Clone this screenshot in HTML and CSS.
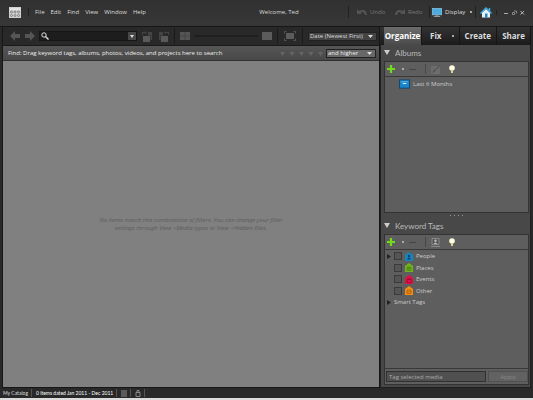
FILE: index.html
```html
<!DOCTYPE html>
<html lang="en">

<head>
    <meta charset="UTF-8">
    <meta name="viewport" content="width=device-width, initial-scale=1.0">
    <title>Organizer</title>
    <link rel="stylesheet" href="styles.css">
</head>

<body>
    <header class="titlebar">
        <svg class="logo" width="12" height="11" viewBox="0 0 12 11">
            <rect width="12" height="11" fill="#d2d2d2" />
            <path d="M1 2h10" stroke="#f4f4f4" />
            <g fill="none" stroke="#666" stroke-width=".7">
                <circle cx="2.5" cy="5" r="1" /><circle cx="6" cy="5" r="1" /><circle cx="9.5" cy="5" r="1" />
                <circle cx="2.5" cy="8.5" r="1" /><circle cx="6" cy="8.5" r="1" /><circle cx="9.5" cy="8.5" r="1" />
            </g>
        </svg>
        <nav class="menu">
            <button>File</button>
            <button>Edit</button>
            <button>Find</button>
            <button>View</button>
            <button>Window</button>
            <button>Help</button>
        </nav>
        <span class="welcome">Welcome, Ted</span>
        <div class="actions">
            <button class="history" disabled>
                <svg width="10" height="7" viewBox="0 0 10 7"><path d="M0 0v5h5L3.500 3.500Q7 1.500 8 6h2Q9-1 2 2z" fill="#555" /></svg>
                Undo
            </button>
            <button class="history" disabled>
                <svg width="10" height="7" viewBox="0 0 10 7"><path d="M10 0v5H5L6.500 3.500Q3 1.500 2 6H0Q1-1 8 2z" fill="#555" /></svg>
                Redo
            </button>
            <button class="display">
                <svg width="10" height="9" viewBox="0 0 11 10">
                    <rect x=".5" y=".5" width="10" height="7" fill="#4dabdf" stroke="#79b9da" />
                    <path d="M4 8h3v1h2v1H2V9h2z" fill="#8b9aa2" />
                </svg>
                Display
                <span class="dot"></span>
            </button>
            <button class="home" aria-label="Home">
                <svg width="12" height="11" viewBox="0 0 12 11">
                    <path d="M2 5.500v5h8v-5L6 2z" fill="#e6f3fa" />
                    <path d="M.5 6.500L6 1l5.500 5.500M9.500 1v3" fill="none" stroke="#43a9df" stroke-width="1.500" />
                    <rect x="5" y="6.500" width="2.500" height="4" fill="#2585bb" />
                </svg>
            </button>
            <div class="window-buttons">
                <button aria-label="Minimize"><svg width="5" height="5"><path d="M0 3.500h4" stroke="#aaa" /></svg></button>
                <button aria-label="Restore"><svg width="5" height="5"><path d="M.5 2.500h2v2h-2zM2 1h2.500v2.500" fill="none" stroke="#888" /></svg></button>
                <button aria-label="Close"><svg width="5" height="5"><path d="M.5 1l3.500 3.500M4 1L.5 4.500" stroke="#bbb" /></svg></button>
            </div>
        </div>
    </header>

    <div class="workspace">
        <main class="browser">
            <div class="toolbar">
                <button aria-label="Back"><svg width="10" height="10" viewBox="0 0 10 10"><path d="M0 5l5-5v3h5v4H5v3z" fill="#555" /></svg></button>
                <button class="forward" aria-label="Forward"><svg width="10" height="10" viewBox="0 0 10 10"><path d="M10 5L5 0v3H0v4h5v3z" fill="#555" /></svg></button>
                <div class="search">
                    <svg width="8" height="8" viewBox="0 0 8 8"><circle cx="3" cy="3" r="2.200" fill="none" stroke="#ddd" /><path d="M4.500 4.500L7.500 7.500" stroke="#ddd" stroke-width="1.400" /></svg>
                    <input type="text" aria-label="Search">
                    <button aria-label="Search options"><svg width="4" height="3"><path d="M0 0h4L2 3z" fill="#ddd" /></svg></button>
                </div>
                <div class="rotate">
                    <button aria-label="Rotate left"><svg width="11" height="11" viewBox="0 0 11 11"><path d="M1 5h7v6H1z" fill="#5a5a5a" /><path d="M6 1h4v8H8.500V4.500H6zM0 4V1h3V0l2 1.500L3 3V2H1v2z" fill="#444" /></svg></button>
                    <button aria-label="Rotate right"><svg width="11" height="11" viewBox="0 0 11 11"><path d="M3 5h7v6H3z" fill="#5a5a5a" /><path d="M5 1H1v8h1.500V4.500H5zM11 4V1H8V0L6 1.500 8 3V2h2v2z" fill="#444" /></svg></button>
                </div>
                <div class="zoom">
                    <svg width="10" height="8" viewBox="0 0 10 8"><path d="M0 0h10v8H0z" fill="#555" /><path d="M5 0v8M0 4h10" stroke="#464646" /></svg>
                    <input type="range" aria-label="Thumbnail size" disabled>
                    <svg width="10" height="8"><rect width="10" height="8" fill="#5c5c5c" /></svg>
                </div>
                <button class="fullscreen" aria-label="Full screen"><svg width="12" height="10" viewBox="0 0 12 10"><rect x="2" y="2" width="8" height="6" fill="#5c5c5c" /><path d="M.5 2.500v-2h2M9.500 .5h2v2M11.500 7.500v2h-2M2.500 9.500h-2v-2" fill="none" stroke="#555" /></svg></button>
                <select class="sort" aria-label="Sort order">
                    <option>Date (Newest First)</option>
                </select>
            </div>
            <div class="findbar">
                <span>Find: Drag keyword tags, albums, photos, videos, and projects here to search</span>
                <svg class="stars" width="44" height="5" viewBox="0 0 44 5">
                    <path d="M0 1h5L2.500 5zM9.500 1h5L12 5zM19 1h5l-2.500 4zM28.500 1h5L31 5zM38 1h5l-2.500 4z" fill="#656565" />
                </svg>
                <select class="rating" aria-label="Rating filter">
                    <option>and higher</option>
                </select>
            </div>
            <div class="photos">
                <p>No items match this combination of filters. You can change your filter<br>settings through View &gt;Media types or View &gt;Hidden Files.</p>
            </div>
        </main>

        <aside class="sidebar">
            <nav class="tabs">
                <button class="active">Organize</button>
                <button class="fix">Fix <span class="dot"></span></button>
                <button>Create</button>
                <button>Share</button>
            </nav>
            <div class="panels">
                <section class="panel albums">
                    <h2><svg width="6" height="5"><path d="M0 0h6L3 5z" fill="#ccc" /></svg>Albums</h2>
                    <div class="box">
                        <div class="tools">
                            <button aria-label="New album"><svg width="8" height="8"><path d="M4 0v8M0 4h8" stroke="#72dc1b" stroke-width="2.200" /></svg></button>
                            <span class="dot"></span>
                            <button class="remove" aria-label="Delete album"><svg width="7" height="8"><path d="M0 4.500h7" stroke="#444" /></svg></button>
                            <button class="edit" aria-label="Edit album"><svg width="9" height="9" viewBox="0 0 9 9"><rect y="1" width="9" height="8" fill="#6c6c6c" /><path d="M1.500 8l1-3 5.500-5 1 1-5 5z" fill="#474747" /><path d="M3 5.500l5-5" stroke="#909090" stroke-width=".7" /></svg></button>
                            <button aria-label="Tip"><svg width="6" height="9" viewBox="0 0 6 9"><circle cx="3" cy="3" r="2.800" fill="#fffde0" /><path d="M2 5h2v3H2z" fill="#d8d19a" /></svg></button>
                        </div>
                        <div class="album">
                            <svg width="11" height="10" viewBox="0 0 12 10"><rect x=".5" y=".5" width="11" height="9" fill="#1686cc" stroke="#16436b" /><path d="M2 2.500h8" stroke="#65b8e7" /><path d="M4 4.500h4" stroke="#fff" /></svg>
                            Last 6 Months
                        </div>
                    </div>
                </section>
                <div class="splitter"><i></i><i></i><i></i><i></i></div>
                <section class="panel keywords">
                    <h2><svg width="6" height="5"><path d="M0 0h6L3 5z" fill="#ccc" /></svg>Keyword Tags</h2>
                    <div class="box">
                        <div class="tools">
                            <button aria-label="New keyword tag"><svg width="8" height="8"><path d="M4 0v8M0 4h8" stroke="#72dc1b" stroke-width="2.200" /></svg></button>
                            <span class="dot"></span>
                            <button class="remove" aria-label="Delete keyword tag"><svg width="7" height="8"><path d="M0 4.500h7" stroke="#444" /></svg></button>
                            <button class="edit" aria-label="Find people"><svg width="9" height="9" viewBox="0 0 9 9"><path d="M1 .5h7v6H1zM0 8.500h9" fill="#555" stroke="#888" /><circle cx="4.500" cy="2.800" r="1.200" fill="#bbb" /><path d="M2.500 6q2-3 4 0z" fill="#bbb" /></svg></button>
                            <button aria-label="Tip"><svg width="6" height="9" viewBox="0 0 6 9"><circle cx="3" cy="3" r="2.800" fill="#fffde0" /><path d="M2 5h2v3H2z" fill="#d8d19a" /></svg></button>
                        </div>
                        <ul class="tags">
                            <li>
                                <svg class="arrow" width="4" height="5"><path d="M0 0l4 2.500L0 5z" fill="#222" /></svg>
                                <label><input type="checkbox">
                                    <svg width="8" height="9" viewBox="0 0 8 9"><path d="M0 9V3l4-3 4 3v6z" fill="#1684bf" /><circle cx="4" cy="4" r="1.200" fill="#0b4266" /><path d="M2 7.500q2-4 4 0z" fill="#0b4266" /></svg>
                                    People</label>
                            </li>
                            <li>
                                <span class="arrow"></span>
                                <label><input type="checkbox">
                                    <svg width="8" height="9" viewBox="0 0 8 9"><path d="M0 9V3l4-3 4 3v6z" fill="#72b51b" /><path d="M2 4h4v3.500H2zM4 4v3M2 5.500h4" fill="none" stroke="#4d801a" stroke-width=".8" /></svg>
                                    Places</label>
                            </li>
                            <li>
                                <span class="arrow"></span>
                                <label><input type="checkbox">
                                    <svg width="8" height="9" viewBox="0 0 8 9"><path d="M0 9V3l4-3 4 3v6z" fill="#df1046" /><path d="M2 4.500h4v3H2zM3 3v2M5 3v2" fill="none" stroke="#980c35" stroke-width=".8" /></svg>
                                    Events</label>
                            </li>
                            <li>
                                <span class="arrow"></span>
                                <label><input type="checkbox">
                                    <svg width="8" height="9" viewBox="0 0 8 9"><path d="M0 9V3l4-3 4 3v6z" fill="#f58d12" /><path d="M2 4h4v3.500H2zM2 5.700h4" fill="none" stroke="#b0600c" stroke-width=".8" /></svg>
                                    Other</label>
                            </li>
                            <li>
                                <svg class="arrow" width="4" height="5"><path d="M0 0l4 2.500L0 5z" fill="#222" /></svg>
                                Smart Tags
                            </li>
                        </ul>
                        <form class="tag-form">
                            <input type="text" placeholder="Tag selected media" aria-label="Tag selected media">
                            <button type="button" disabled>Apply</button>
                        </form>
                    </div>
                </section>
            </div>
        </aside>
    </div>

    <footer class="statusbar">
        <span>My Catalog</span>
        <span class="count">0 items dated Jan 2011 - Dec 2011</span>
        <span><svg width="6" height="7"><rect width="6" height="7" fill="#5a5a5a" /></svg></span>
        <span><svg width="6" height="7" viewBox="0 0 6 7"><path d="M1 2.500h4v4H1zM2 2V.5h2V2" fill="none" stroke="#888" /></svg></span>
    </footer>
</body>

</html>
```

FILE: styles.css
```css
* {
    box-sizing: border-box;
}

body {
    display: flex;
    flex-direction: column;
    height: 100vh;
    margin: 0;
    font-family: "Open Sans", "Noto Sans", sans-serif;
    font-size: 6px;
    line-height: 8px;
    color: #ddd;
    background-color: #292929;
    border-bottom: 2px solid #ddd;
}

button,
input,
select {
    font: inherit;
    color: inherit;
    margin: 0;
    padding: 0;
    border: none;
    background: none;
}

svg {
    display: block;
    flex: none;
}

button {
    display: flex;
    align-items: center;
    flex: none;
}

.dot {
    width: 2px;
    height: 2px;
    background-color: #aaa;
}

/* title bar */
.titlebar {
    display: flex;
    align-items: center;
    flex: none;
    height: 27px;
    padding: 0 8px 2px 9px;
    background: linear-gradient(#313131, #373737);
    border-bottom: 1px solid #161616;
}

.menu {
    display: flex;
    gap: 6px;
    margin-left: 7px;
    padding-left: 6px;
    border-left: 1px solid #202020;
}

.welcome {
    flex: 1;
    text-align: center;
    padding-left: 64px;
}

.actions {
    display: flex;
    align-items: center;
    height: 12px;
    border-left: 1px solid #202020;
}

.actions > button {
    gap: 3px;
    height: 12px;
}

.actions .history {
    width: 38px;
    padding-left: 8px;
    color: #777;
}

.actions .display {
    width: 46px;
    margin-left: 4px;
    padding-left: 2px;
    border-left: 1px solid #202020;
}

.display .dot {
    margin-left: 2px;
}

.actions .home {
    padding: 0 4px;
    border-left: 1px solid #202020;
}

.window-buttons {
    display: flex;
    gap: 3px;
    padding-left: 7px;
    border-left: 1px solid #202020;
}

/* workspace */
.workspace {
    display: flex;
    flex: 1;
    min-height: 0;
    padding: 0 2px;
}

.browser {
    display: flex;
    flex-direction: column;
    flex: 1;
    min-width: 0;
    border: 1px solid #171717;
    border-top: none;
}

.toolbar {
    display: flex;
    align-items: center;
    flex: none;
    height: 18px;
    padding: 0 2px 0 7px;
    background-color: #292929;
}

.toolbar .forward {
    margin: 0 4px 0 5px;
}

.search {
    display: flex;
    align-items: center;
    flex: 1;
    min-width: 0;
    height: 10px;
    padding-left: 1px;
    background-color: #1d1d1d;
    border: 1px solid #151515;
}

.search input {
    flex: 1;
    min-width: 0;
}

.search button {
    justify-content: center;
    width: 8px;
    height: 8px;
    background-color: #484848;
}

.rotate {
    display: flex;
    gap: 5px;
    padding: 0 5px;
}

.zoom {
    display: flex;
    align-items: center;
    gap: 4px;
    height: 16px;
    padding: 0 5px;
    border: 1px solid #1a1a1a;
    border-width: 0 1px;
}

.zoom input {
    appearance: none;
    width: 64px;
    height: 2px;
    background-color: #1f1f1f;
}

.zoom input::-webkit-slider-thumb {
    appearance: none;
    width: 0;
}

.fullscreen {
    height: 16px;
    padding: 0 6px;
    border-right: 1px solid #1a1a1a;
}

select {
    appearance: none;
    height: 9px;
    line-height: 7px;
    padding: 0 10px 0 1px;
    border: 1px solid #222;
    background: url("data:image/svg+xml,%3Csvg xmlns='http://www.w3.org/2000/svg' width='5' height='3'%3E%3Cpath d='M0 0h5L2.500 3z' fill='%23ddd'/%3E%3C/svg%3E") no-repeat right 3px center #444;
}

.sort {
    width: 69px;
    margin-left: 5px;
}

.findbar {
    display: flex;
    align-items: center;
    flex: none;
    height: 16px;
    padding: 0 3px 0 5px;
    color: #eee;
    background: linear-gradient(#565656, #484848);
    border-top: 1px solid #191919;
    border-bottom: 1px solid #303030;
}

.stars {
    margin-left: auto;
}

.rating {
    width: 50px;
    margin-left: 2px;
    background-color: #686868;
}

.photos {
    display: flex;
    align-items: center;
    justify-content: center;
    flex: 1;
    color: #5c5c5c;
    background-color: #808080;
}

.photos p {
    margin: 0;
    text-align: center;
    font-style: italic;
}

/* sidebar */
.sidebar {
    display: flex;
    flex-direction: column;
    flex: none;
    width: 151px;
}

.tabs {
    display: flex;
    flex: none;
    height: 18px;
    padding-left: 4px;
    background: linear-gradient(#333, #1b1b1b);
}

.tabs button {
    justify-content: center;
    flex: 1 1 auto;
    font-size: 8px;
    font-weight: bold;
    border-right: 1px solid #161616;
}

.tabs .active {
    flex: none;
    width: 38px;
    color: #fff;
    background: linear-gradient(#6c6c6c, #4a4a4a);
}

.tabs .fix {
    gap: 10px;
    padding-left: 3px;
}

.panels {
    display: flex;
    flex-direction: column;
    flex: 1;
    min-height: 0;
    padding: 0 1px 2px 3px;
    background-color: #484848;
    border: 1px solid #202020;
    border-top: none;
}

.panel {
    display: flex;
    flex-direction: column;
    min-height: 0;
}

.albums {
    flex: 168;
}

.keywords {
    flex: 167;
}

.panel h2 {
    display: flex;
    align-items: center;
    flex: none;
    gap: 5px;
    height: 16px;
    margin: 0;
    padding-bottom: 1px;
    font-family: Lato, "Open Sans", sans-serif;
    font-size: 8px;
    font-weight: normal;
    color: #bbb;
}

.box {
    display: flex;
    flex-direction: column;
    flex: 1;
    min-height: 0;
    background-color: #5e5e5e;
    border: 1px solid #333;
}

.tools {
    display: flex;
    align-items: center;
    flex: none;
    height: 15px;
    padding-left: 2px;
    border-bottom: 1px solid #393939;
}

.tools .dot {
    margin: 0 4px 0 7px;
}

.tools .remove {
    padding: 1px 9px 1px 1px;
    border-right: 1px solid #484848;
}

.tools .edit {
    margin: 0 9px 0 5px;
}

.album {
    display: flex;
    align-items: center;
    gap: 3px;
    padding: 2px 14px;
    color: #ccc;
}

.splitter {
    display: flex;
    align-items: center;
    justify-content: center;
    flex: none;
    gap: 3px;
    height: 5px;
}

.splitter i {
    width: 1px;
    height: 1px;
    background-color: #999;
}

.tags {
    flex: 1;
    margin: 0;
    padding: 0 2px;
    list-style: none;
    color: #ccc;
}

.tags li {
    display: flex;
    align-items: center;
    gap: 3px;
    height: 12px;
}

.tags li:nth-child(even) {
    height: 11px;
}

.tags .arrow {
    width: 4px;
}

.tags label {
    display: flex;
    align-items: center;
    gap: 3px;
}

.tags input {
    appearance: none;
    width: 8px;
    height: 8px;
    background-color: #555;
    border: 1px solid #3a3a3a;
}

.tag-form {
    display: flex;
    flex: none;
    gap: 2px;
    padding: 2px 0 2px 1px;
    border-top: 1px solid #393939;
}

.tag-form input {
    flex: 1;
    min-width: 0;
    height: 11px;
    padding: 0 2px;
    background-color: #505050;
    border: 1px solid #303030;
}

.tag-form input::placeholder {
    color: #aaa;
}

.tag-form button {
    justify-content: center;
    width: 40px;
    color: #888;
    background-color: #626262;
    border: 1px solid #505050;
}

/* status bar */
.statusbar {
    display: flex;
    align-items: center;
    flex: none;
    height: 10px;
    padding-left: 3px;
    font-family: Lato, "Open Sans", sans-serif;
    font-size: 5px;
    background-color: #292929;
}

.statusbar span {
    display: flex;
    align-items: center;
    height: 8px;
    margin-right: 4px;
    padding-right: 3px;
    border-right: 1px solid #555;
}

.statusbar .count {
    color: #fff;
}
```
